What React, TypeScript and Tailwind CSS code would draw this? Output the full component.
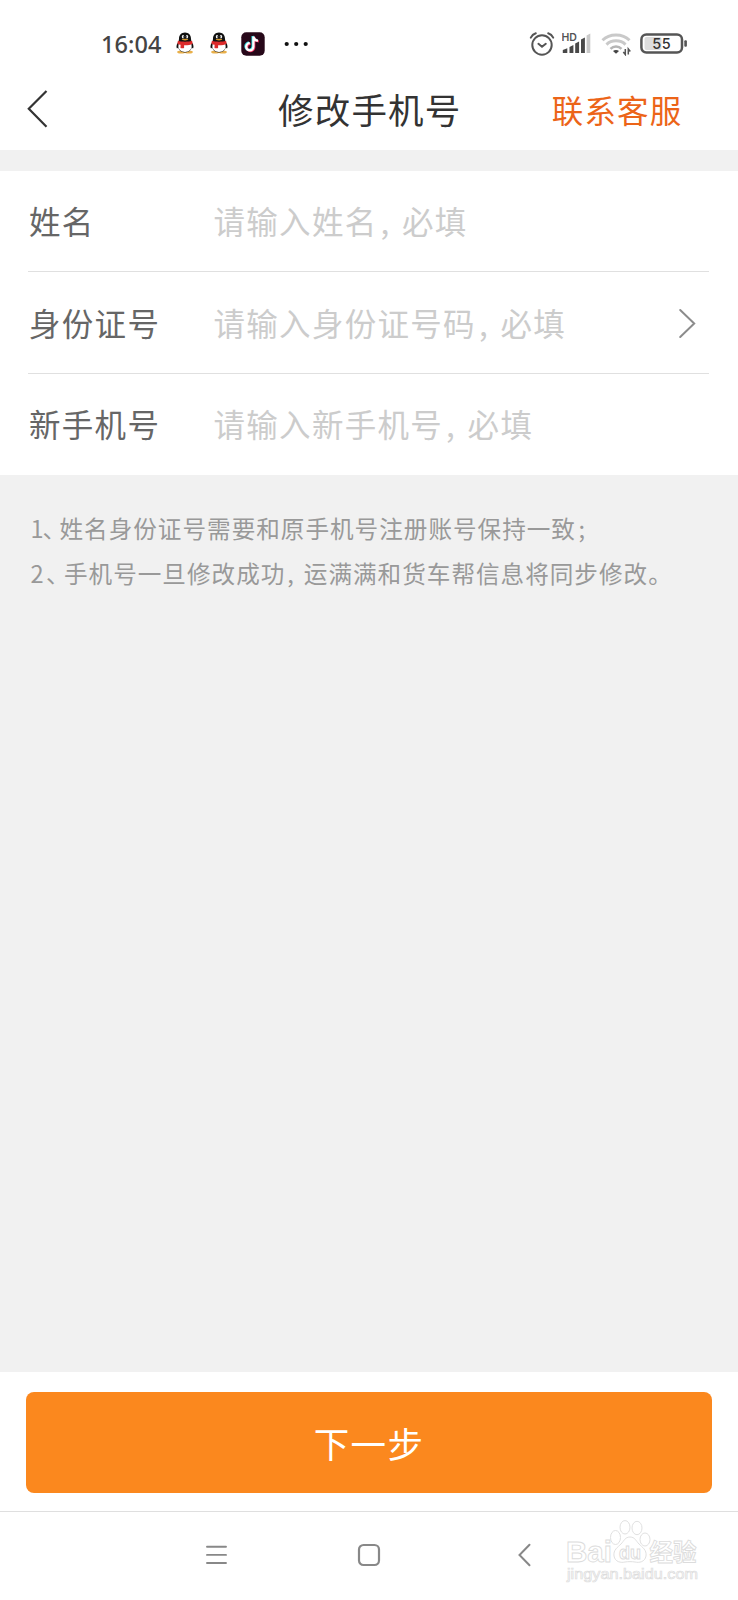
import type { ReactNode } from 'react';

const Punct = ({ className, children }: { className: string; children: ReactNode }) => (
  <span className={`inline-block whitespace-nowrap tracking-normal ${className}`}>{children}</span>
);

const Penguin = () => (
  <svg className="h-[22px] w-[18px] shrink-0" viewBox="0 0 18 22">
    <ellipse cx="5.2" cy="20" rx="4" ry="1.5" fill="#e9b04a" />
    <ellipse cx="12.8" cy="20" rx="4" ry="1.5" fill="#e9b04a" />
    <path d="M2.600 9.500C.9 11.600.1 14.200.7 16c.3.8 1 .2 1.800-1M15.400 9.500c1.700 2.100 2.500 4.700 1.900 6.500-.3.800-1 .2-1.800-1" fill="#111" />
    <path d="M9 .5c-3.800 0-6 2.800-6 6.200 0 1.500-.9 3.700-1.100 6C1.600 17 4.700 20.400 9 20.400s7.400-3.400 7.100-7.700c-.2-2.300-1.100-4.500-1.100-6C15 3.300 12.800.5 9 .5Z" fill="#111" />
    <path d="M3.200 11h11.600c.6 1 .8 2 .8 3.200 0 3.400-2.700 5.700-6.600 5.700s-6.600-2.300-6.600-5.700c0-1.200.2-2.200.8-3.200Z" fill="#fff" />
    <path d="M1.900 8.800c4 1.200 10.200 1.200 14.200 0l.5 3c-2.200 1.200-5 1.600-8.500 1.500v2.700c-1 .5-2.800.4-3.600-.1l.1-3.100c-1.200-.3-2.200-.6-3.200-1.100Z" fill="#dc2b2b" />
    <ellipse cx="7" cy="4.700" rx="1.200" ry="1.700" fill="#fff" />
    <ellipse cx="11" cy="4.700" rx="1.200" ry="1.700" fill="#fff" />
    <circle cx="7.400" cy="4.900" r=".6" fill="#111" />
    <circle cx="10.600" cy="4.900" r=".6" fill="#111" />
    <ellipse cx="9" cy="7.600" rx="3.300" ry=".8" fill="#d99a2b" />
  </svg>
);

const note = 'M12.400 4.500v10.300a3.600 3.600 0 1 1-3.600-3.600M12.400 4.500c.3 2.400 2 4 4.600 4.200';

const Tiktok = () => (
  <svg className="h-[24px] w-[24px] shrink-0" viewBox="0 0 24 24">
    <rect x=".3" y=".3" width="23.400" height="23.400" rx="5" fill="#270819" />
    <g fill="none" strokeWidth="2.300">
      <path d={note} stroke="#25d7dc" transform="translate(-.8 -.5)" />
      <path d={note} stroke="#ee2c5b" transform="translate(.8 .6)" />
      <path d={note} stroke="#fff" />
    </g>
  </svg>
);

const StatusBar = () => (
  <div className="flex h-[70px] items-start pt-[32px] text-[#444]">
    <div className="ml-[101px] w-[75px] shrink-0 font-['Noto_Sans'] text-[23.500px] leading-[24px] font-medium tracking-[0.100px]">16:04</div>
    <Penguin />
    <div className="w-[16px]" />
    <Penguin />
    <div className="w-[13px]" />
    <Tiktok />
    <svg className="ml-[18px] h-[24px] w-[28px]" viewBox="0 0 28 24" fill="#111">
      <circle cx="3.700" cy="12" r="2.100" />
      <circle cx="13.200" cy="12" r="2.100" />
      <circle cx="22.700" cy="12" r="2.100" />
    </svg>
    <svg className="ml-[218px] h-[24px] w-[26px]" viewBox="0 0 26 24" fill="none" stroke="#555" strokeWidth="2" strokeLinecap="round">
      <circle cx="13" cy="13" r="9.700" />
      <path d="m9.400 11.800 3.600 3 3.800-3M1.800 5.600C2.800 3.600 4.600 2 6.800 1.300M24.200 5.600C23.200 3.600 21.400 2 19.200 1.300" />
    </svg>
    <svg className="ml-[7px] h-[24px] w-[30px]" viewBox="0 0 30 24">
      <text x="-.5" y="8.800" className="font-['Inter']" fontSize="10.500" fontWeight="600" fill="#555">HD</text>
      <path d="M.8 21v-3l4.500-1.700V21ZM7.500 21v-6l3.900-2V21ZM13.200 21v-9.500l3.900-2V21ZM19 21V7.500l3.900-2V21Z" fill="#484848" />
      <path d="M24.600 21V3.500l3.700-2V21Z" fill="#c9c9c9" />
    </svg>
    <svg className="ml-[8px] h-[24px] w-[32px]" viewBox="0 0 32 24" fill="none">
      <path d="M2.500 8.200c7-7 20-7 27 0M6.500 12.600c5-5 14-5 19 0" stroke="#c9c9c9" strokeWidth="3" />
      <path d="M10.500 16.800c3-3 8-3 11 0" stroke="#b5b5b5" strokeWidth="2.600" />
      <path d="M13 19c1.500-1.500 4.500-1.500 6 0L16 21.800Z" fill="#444" />
      <path d="M25.300 17v5.500l-2-2.500M28.300 22.500V17l2 2.500" stroke="#555" strokeWidth="1.500" />
    </svg>
    <svg className="ml-[8px] h-[24px] w-[48px]" viewBox="0 0 48 24">
      <rect x="1.400" y="2.500" width="40.600" height="18" rx="5" fill="#fff" stroke="#555" strokeWidth="2.500" />
      <rect x="4.500" y="5" width="17" height="13" rx="2" fill="#ddd" />
      <rect x="44.300" y="8.300" width="2.600" height="6.500" rx="1" fill="#555" />
      <text x="21.700" y="16.700" textAnchor="middle" className="font-['Inter']" fontSize="14.500" fontWeight="500" letterSpacing=".4" fill="#333">55</text>
    </svg>
  </div>
);

const Field = ({ label, hint, line, arrow }: { label: string; hint: string; line?: boolean; arrow?: boolean }) => (
  <div className={`mr-[29px] ml-[28px] flex h-[101.400px] items-center text-[31.500px] leading-[40px] tracking-[1.300px] ${line ? 'border-b border-[#e0e0e0]' : ''}`}>
    <div className="w-[185.500px] shrink-0 pb-[2px] pl-[1px] text-[#666]">{label}</div>
    <div className="grow pb-[2px] whitespace-nowrap text-[#ccc]">
      {hint}
      <Punct className="w-[24.500px] pl-[3px]">,</Punct>
      必填
    </div>
    {arrow && (
      <svg className="mr-[12px] h-[32px] w-[19px] shrink-0" viewBox="0 0 19 32" fill="none" stroke="#8c8c8c" strokeWidth="2" strokeLinecap="round">
        <path d="m2.200 3 14 13.500-14 13.500" />
      </svg>
    )}
  </div>
);

const Watermark = () => (
  <svg className="absolute top-[4px] right-[34px] h-[76px] w-[140px]" viewBox="0 0 140 76" fill="#fff" stroke="#dcdcdc" strokeWidth=".9">
    <text x="2" y="46" className="font-['Liberation_Sans']" fontSize="30" fontWeight="700" textLength="46" lengthAdjust="spacingAndGlyphs">Bai</text>
    <ellipse cx="51.500" cy="21.500" rx="5" ry="7" />
    <ellipse cx="61" cy="11.300" rx="5" ry="6.700" />
    <ellipse cx="73" cy="12" rx="5" ry="6.700" />
    <ellipse cx="81" cy="23.500" rx="5" ry="6.500" />
    <path d="M66 21c-5 0-6 4-9 7s-8 6-7 12c1 6 7 7 11 6 3-.5 7-.5 10 0 4 1 10 0 11-6 1-6-4-9-7-12s-4-7-9-7Z" />
    <text x="55" y="43" className="font-['Liberation_Sans']" fontSize="18" fontWeight="700" textLength="22" lengthAdjust="spacingAndGlyphs">du</text>
    <text x="85.500" y="44.500" className="font-['Noto_Sans_CJK_SC']" fontSize="24" fontWeight="700" textLength="47" lengthAdjust="spacingAndGlyphs">经验</text>
    <text x="3" y="63" className="font-['Liberation_Sans']" fontSize="15" strokeWidth=".7" textLength="131" lengthAdjust="spacingAndGlyphs">jingyan.baidu.com</text>
  </svg>
);

export default function App() {
  return (
    <div lang="zh-CN" className="flex h-[1600px] w-[738px] flex-col overflow-hidden bg-white font-['Noto_Sans_CJK_SC',sans-serif]">
      <StatusBar />
      <header className="grid h-[80px] shrink-0 grid-cols-[1fr_auto_1fr] items-center">
        <svg className="ml-[26px] h-[42px] w-[24px]" viewBox="0 0 24 42" fill="none" stroke="#333" strokeWidth="2.200">
          <path d="M20.500 2 2.800 19.800l17.700 18" />
        </svg>
        <h1 className="pb-[2px] pl-[1.500px] text-[35.500px] leading-[44px] tracking-[1.200px] text-[#333]">修改手机号</h1>
        <a className="justify-self-end pr-[55.500px] pb-[2px] text-[31.500px] leading-[40px] tracking-[1.200px] text-[#ec6418]">联系客服</a>
      </header>
      <div className="h-[21px] shrink-0 bg-[#f1f1f1]" />
      <section className="h-[304px] shrink-0">
        <Field label="姓名" hint="请输入姓名" line />
        <Field label="身份证号" hint="请输入身份证号码" line arrow />
        <Field label="新手机号" hint="请输入新手机号" />
      </section>
      <main className="grow bg-[#f1f1f1] pt-[31px] pl-[30.500px] text-[23.600px] leading-[45px] tracking-[1px] whitespace-nowrap text-[#999]">
        <p>
          <Punct className="w-[12px]">1</Punct>
          <Punct className="w-[17px] [font-feature-settings:'halt']">、</Punct>
          姓名身份证号需要和原手机号注册账号保持一致
          <Punct className="pl-[2.500px]">;</Punct>
        </p>
        <p>
          <Punct className="w-[15.500px]">2</Punct>
          <Punct className="w-[18px] [font-feature-settings:'halt']">、</Punct>
          手机号一旦修改成功
          <Punct className="w-[18.500px] pl-[2px]">,</Punct>
          运满满和货车帮信息将同步修改。
        </p>
      </main>
      <footer className="h-[139.500px] shrink-0 border-b border-[#dfdfdf] px-[26px] pt-[20px]">
        <button className="flex h-[100.500px] w-full items-center justify-center rounded-[8px] bg-[#fb881e] text-[35.500px] tracking-[1.400px] text-white">下一步</button>
      </footer>
      <nav className="relative h-[88.500px] shrink-0">
        <div className="flex items-center pt-[31.500px] pl-[205px]">
          <svg className="h-[24px] w-[23px]" viewBox="0 0 23 24" fill="none" stroke="#888" strokeWidth="1.900" strokeLinecap="round">
            <path d="M2 3.700h19M2 11.900h19M2 20h19" />
          </svg>
          <svg className="ml-[129px] h-[24px] w-[24px]" viewBox="0 0 24 24" fill="none" stroke="#888" strokeWidth="2.200">
            <rect x="2" y="2" width="20" height="20" rx="4.500" />
          </svg>
          <svg className="ml-[136px] h-[24px] w-[14px]" viewBox="0 0 14 24" fill="none" stroke="#888" strokeWidth="2" strokeLinecap="round">
            <path d="M12.500 1.700 2.500 12l10 10.300" />
          </svg>
        </div>
        <Watermark />
      </nav>
    </div>
  );
}
